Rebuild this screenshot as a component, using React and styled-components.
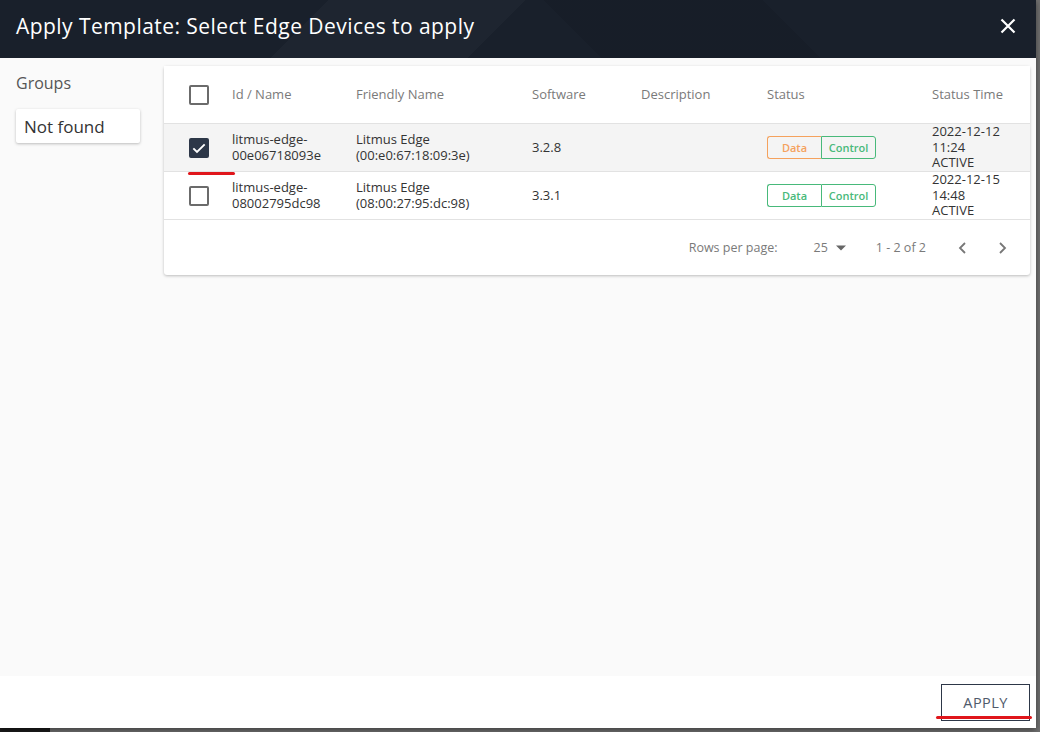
import styled, { createGlobalStyle } from "styled-components";

const GlobalStyle = createGlobalStyle`
  html, body {
    margin: 0;
    padding: 0;
  }
  body {
    font-family: "Open Sans", "Liberation Sans", sans-serif;
    background: #6f6f6f;
  }
`;

const Page = styled.div`
  position: relative;
  width: 1040px;
  height: 732px;
  display: flex;
  overflow: hidden;
`;

const AppSidebar = styled.div`
  width: 50px;
  background: #1b1b1b;
`;

const Backdrop = styled.div`
  flex: 1;
  background: #6f6f6f;
`;

const Dialog = styled.div`
  position: absolute;
  left: 0;
  top: 0;
  width: 1036px;
  height: 728px;
  display: flex;
  flex-direction: column;
  background: #fafafa;
  box-shadow: 0 2px 6px rgba(0, 0, 0, 0.45);
`;

const Header = styled.div`
  height: 58px;
  box-sizing: border-box;
  flex-shrink: 0;
  display: flex;
  align-items: center;
  justify-content: space-between;
  padding: 0 16px 6px 16px;
  background-color: #19202b;
  background-image: linear-gradient(
      135deg,
      transparent 0 30%,
      rgba(255, 255, 255, 0.025) 30% 48%,
      transparent 48% 100%
    ),
    linear-gradient(
      45deg,
      transparent 0 55%,
      rgba(0, 0, 0, 0.08) 55% 75%,
      transparent 75% 100%
    );
`;

const Title = styled.h1`
  margin: 0;
  font-size: 21px;
  font-weight: 400;
  color: #ffffff;
  letter-spacing: 0.45px;
`;

const CloseButton = styled.button`
  border: none;
  background: transparent;
  padding: 0;
  margin-right: 2px;
  width: 20px;
  height: 20px;
  display: flex;
  align-items: center;
  justify-content: center;
  cursor: pointer;
`;

const Body = styled.div`
  flex: 1;
  display: flex;
  padding: 8px 6px 0 0;
  background: #fafafa;
`;

const Side = styled.div`
  width: 164px;
  flex-shrink: 0;
  padding: 6px 24px 0 16px;
  box-sizing: border-box;
`;

const SideTitle = styled.div`
  font-size: 16px;
  line-height: 22px;
  color: #555;
  margin-bottom: 15px;
`;

const EmptyBox = styled.div`
  height: 34px;
  display: flex;
  align-items: center;
  padding: 0 8px;
  background: #fff;
  font-size: 17px;
  color: #333;
  border-radius: 2px;
  box-shadow: 0 1px 3px rgba(0, 0, 0, 0.25);
`;

const Card = styled.div`
  flex: 1;
  align-self: flex-start;
  background: #fff;
  border-radius: 3px;
  box-shadow: 0 1px 3px rgba(0, 0, 0, 0.25);
`;

const Row = styled.div`
  display: grid;
  grid-template-columns: 68px 124px 176px 109px 126px 165px 1fr;
  align-items: center;
  height: ${(p) => p.$height}px;
  background: ${(p) => (p.$selected ? "#f4f4f4" : "#fff")};
  border-bottom: 1px solid #e2e2e2;
  font-size: 13px;
  color: ${(p) => (p.$head ? "#7a7a7a" : "#333")};
`;

const Cell = styled.div`
  line-height: 15.5px;
  white-space: nowrap;
`;

const CheckCell = styled.div`
  position: relative;
  padding-left: 25px;
  display: flex;
  align-items: center;
`;

const Box = styled.div`
  width: 20px;
  height: 20px;
  box-sizing: border-box;
  border-radius: 2px;
  border: 2px solid ${(p) => (p.$checked ? "#2d3748" : "#6b6b6b")};
  background: ${(p) => (p.$checked ? "#2d3748" : "transparent")};
  display: flex;
  align-items: center;
  justify-content: center;
`;

const Mark = styled.div`
  position: absolute;
  height: 3px;
  border-radius: 2px;
  background: #e0161b;
`;

const RowMark = styled(Mark)`
  left: 24px;
  width: 47px;
  top: 34px;
`;

const StatusGroup = styled.div`
  display: inline-flex;
  height: 23px;
  font-size: 11px;
  font-weight: 600;
`;

const StatusPart = styled.div`
  width: ${(p) => p.$w}px;
  display: flex;
  align-items: center;
  justify-content: center;
  box-sizing: border-box;
  color: ${(p) => p.$color};
  border: 1px solid ${(p) => p.$color};
  border-radius: ${(p) => (p.$first ? "3px 0 0 3px" : "0 3px 3px 0")};
  ${(p) => (p.$first ? "border-right: none;" : "")}
`;

const Pager = styled.div`
  height: 55px;
  display: flex;
  align-items: center;
  justify-content: flex-end;
  padding-right: 20px;
  font-size: 12.5px;
  color: #7a7a7a;
`;

const PagerLabel = styled.span`
  margin-right: 36px;
`;

const PerPage = styled.span`
  display: flex;
  align-items: center;
  gap: 7px;
  margin-right: 29px;
`;

const PageNav = styled.span`
  display: flex;
  align-items: center;
  gap: 23px;
  margin-left: 29px;
`;

const Footer = styled.div`
  height: 52px;
  flex-shrink: 0;
  display: flex;
  align-items: center;
  justify-content: flex-end;
  padding-right: 6px;
  background: #fff;
`;

const ApplyWrap = styled.div`
  position: relative;
`;

const ApplyButton = styled.button`
  width: 89px;
  height: 37px;
  border: 1px solid #2d3748;
  background: #fff;
  border-radius: 0;
  font-family: "Open Sans", "Liberation Sans", sans-serif;
  font-size: 14.5px;
  color: #4f5a6b;
  letter-spacing: 0.4px;
  cursor: pointer;
`;

const ApplyMark = styled(Mark)`
  left: -5px;
  width: 96px;
  bottom: 2px;
`;

const devices = [
  {
    id: ["litmus-edge-", "00e06718093e"],
    friendly: ["Litmus Edge", "(00:e0:67:18:09:3e)"],
    software: "3.2.8",
    dataColor: "#f5a25d",
    time: ["2022-12-12", "11:24", "ACTIVE"],
    checked: true,
  },
  {
    id: ["litmus-edge-", "08002795dc98"],
    friendly: ["Litmus Edge", "(08:00:27:95:dc:98)"],
    software: "3.3.1",
    dataColor: "#48b97a",
    time: ["2022-12-15", "14:48", "ACTIVE"],
    checked: false,
  },
];

const Check = () => (
  <svg width="16" height="16" viewBox="0 0 24 24">
    <path d="M3.5 12.5l5.5 5.5L20.5 6.5" fill="none" stroke="#fff" strokeWidth="2.8" />
  </svg>
);

const Lines = ({ lines }) => lines.map((l) => <div key={l}>{l}</div>);

export default function App() {
  return (
    <Page>
      <GlobalStyle />
      <AppSidebar />
      <Backdrop />
      <Dialog>
        <Header>
          <Title>Apply Template: Select Edge Devices to apply</Title>
          <CloseButton aria-label="close">
            <svg width="16" height="16" viewBox="0 0 16 16">
              <path d="M1.5 1.5l13 13M14.5 1.5l-13 13" stroke="#fff" strokeWidth="2.2" />
            </svg>
          </CloseButton>
        </Header>
        <Body>
          <Side>
            <SideTitle>Groups</SideTitle>
            <EmptyBox>Not found</EmptyBox>
          </Side>
          <Card>
            <Row $head $height={57}>
              <CheckCell>
                <Box />
              </CheckCell>
              <Cell>Id / Name</Cell>
              <Cell>Friendly Name</Cell>
              <Cell>Software</Cell>
              <Cell>Description</Cell>
              <Cell>Status</Cell>
              <Cell>Status Time</Cell>
            </Row>
            {devices.map((d) => (
              <Row key={d.id[1]} $height={47} $selected={d.checked}>
                <CheckCell>
                  <Box $checked={d.checked}>{d.checked && <Check />}</Box>
                  {d.checked && <RowMark />}
                </CheckCell>
                <Cell>
                  <Lines lines={d.id} />
                </Cell>
                <Cell>
                  <Lines lines={d.friendly} />
                </Cell>
                <Cell>{d.software}</Cell>
                <Cell />
                <Cell>
                  <StatusGroup>
                    <StatusPart $first $w={54} $color={d.dataColor}>
                      Data
                    </StatusPart>
                    <StatusPart $w={55} $color="#48b97a">
                      Control
                    </StatusPart>
                  </StatusGroup>
                </Cell>
                <Cell>
                  <Lines lines={d.time} />
                </Cell>
              </Row>
            ))}
            <Pager>
              <PagerLabel>Rows per page:</PagerLabel>
              <PerPage>
                25
                <svg width="12" height="12" viewBox="0 0 12 12">
                  <path d="M1 3.5h10L6 8.5z" fill="#666" />
                </svg>
              </PerPage>
              <span>1 - 2 of 2</span>
              <PageNav>
                <svg width="16" height="16" viewBox="0 0 16 16">
                  <path d="M10 3l-5 5 5 5" fill="none" stroke="#777" strokeWidth="1.8" />
                </svg>
                <svg width="16" height="16" viewBox="0 0 16 16">
                  <path d="M6 3l5 5-5 5" fill="none" stroke="#777" strokeWidth="1.8" />
                </svg>
              </PageNav>
            </Pager>
          </Card>
        </Body>
        <Footer>
          <ApplyWrap>
            <ApplyButton>APPLY</ApplyButton>
            <ApplyMark />
          </ApplyWrap>
        </Footer>
      </Dialog>
    </Page>
  );
}
